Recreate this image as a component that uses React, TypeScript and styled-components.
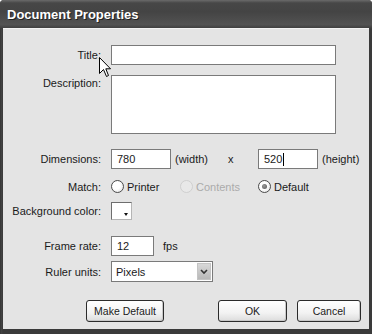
import React from 'react'
import styled, { createGlobalStyle } from 'styled-components'

const GlobalStyle = createGlobalStyle`
  html, body {
    margin: 0;
    padding: 0;
    background: #fff;
  }
  body {
    font-family: "Liberation Sans", Arial, sans-serif;
    font-size: 11px;
    color: #1a1a1a;
  }
`

const Window = styled.div`
  position: relative;
  width: 372px;
  height: 334px;
  box-sizing: border-box;
  display: flex;
  flex-direction: column;
  background: linear-gradient(90deg, #2e2e2e, #444 1px, #3a3a3a 3px);
  border-radius: 4px 4px 0 0;
  overflow: hidden;
`

const TitleBar = styled.div`
  height: 29px;
  flex-shrink: 0;
  display: flex;
  align-items: center;
  padding-left: 7px;
  padding-bottom: 1px;
  box-sizing: border-box;
  background: linear-gradient(#6a6a6a 0, #474747 3px, #444 40%, #525252 85%, #3a3a3a 100%);
  color: #fff;
  font-size: 13px;
  font-weight: bold;
  text-shadow: 1px 1px 0 #222;
`

const Body = styled.div`
  flex: 1;
  margin: 0 3px 5px 3px;
  padding-top: 16px;
  display: flex;
  flex-direction: column;
  background: #e4e4e4;
  border-top: 1px solid #f2f2f2;
  margin-top: -1px;
`

const Row = styled.div<{ $top: number; $align?: string }>`
  display: flex;
  align-items: ${p => p.$align || 'center'};
  margin-top: ${p => p.$top}px;
`

const Label = styled.div<{ $pad?: number }>`
  width: 98px;
  flex-shrink: 0;
  margin-right: 10px;
  text-align: right;
  padding-top: ${p => p.$pad || 0}px;
  white-space: nowrap;
`

const Field = styled.div<{ $w: number; $h?: number }>`
  width: ${p => p.$w}px;
  height: ${p => p.$h || 20}px;
  box-sizing: border-box;
  flex-shrink: 0;
  display: flex;
  align-items: center;
  padding-left: 5px;
  border: 1px solid #7a7a7a;
  background: #fff;
`

const Caret = styled.span`
  display: inline-block;
  width: 1px;
  height: 13px;
  margin-left: 1px;
  background: #000;
`

const Text = styled.span<{ $left?: number; $muted?: boolean }>`
  margin-left: ${p => p.$left || 0}px;
  color: ${p => (p.$muted ? '#ababab' : 'inherit')};
  white-space: nowrap;
`

const Option = styled.div<{ $w?: number }>`
  display: flex;
  align-items: center;
  width: ${p => (p.$w ? `${p.$w}px` : 'auto')};
  flex-shrink: 0;
`

const Radio = styled.span<{ $checked?: boolean; $disabled?: boolean }>`
  width: 13px;
  height: 13px;
  box-sizing: border-box;
  border-radius: 50%;
  margin-right: 3px;
  display: flex;
  align-items: center;
  justify-content: center;
  border: 1px solid ${p => (p.$disabled ? '#cfcfcf' : '#4a4a4a')};
  background: ${p => (p.$disabled ? '#e8e8e8' : 'radial-gradient(circle at 40% 40%, #fff 40%, #dcdcdc 100%)')};

  &::after {
    content: '';
    display: ${p => (p.$checked ? 'block' : 'none')};
    width: 5px;
    height: 5px;
    border-radius: 50%;
    background: radial-gradient(circle at 40% 40%, #9a9a9a, #555);
  }
`

const Swatch = styled.div`
  position: relative;
  width: 21px;
  height: 18px;
  box-sizing: border-box;
  border: 1px solid #6e6e6e;
  border-right-color: #b5b5b5;
  border-bottom-color: #b5b5b5;
  background: #fff;

  &::after {
    content: '';
    position: absolute;
    right: 3px;
    bottom: 3px;
    border-left: 2.5px solid transparent;
    border-right: 2.5px solid transparent;
    border-top: 3px solid #111;
  }
`

const Select = styled.div`
  width: 102px;
  height: 21px;
  box-sizing: border-box;
  display: flex;
  align-items: center;
  padding: 0 1px 0 4px;
  border: 1px solid #7a7a7a;
  background: #fff;
`

const SelectValue = styled.span`
  flex: 1;
`

const SelectArrow = styled.span`
  width: 14px;
  height: 17px;
  display: flex;
  align-items: center;
  justify-content: center;
  background: linear-gradient(#d8d8d8, #b8b8b8);
  border: 1px solid #c4c4c4;
  box-sizing: border-box;
`

const ButtonRow = styled.div`
  display: flex;
  align-items: center;
  margin-top: 18px;
  padding: 0 8px 0 83px;
`

const Button = styled.div<{ $w: number; $gap?: number }>`
  width: ${p => p.$w}px;
  height: 22px;
  box-sizing: border-box;
  margin-left: ${p => p.$gap || 0}px;
  display: flex;
  align-items: center;
  justify-content: center;
  border: 1px solid #2b2b2b;
  border-radius: 3px;
  background: linear-gradient(#ffffff, #f2f2f2 60%, #dcdcdc);
  box-shadow: inset -1px -1px 0 #c8c8c8;
  font-size: 10.5px;
`

const Spacer = styled.div`
  flex: 1;
`

const Pointer = styled.svg`
  position: absolute;
  left: 99px;
  top: 57px;
`

const App = () => {
  return (
    <>
      <GlobalStyle />
      <Window>
        <TitleBar>Document Properties</TitleBar>
        <Body>
          <Row $top={0}>
            <Label>Title:</Label>
            <Field $w={225} />
          </Row>
          <Row $top={10} $align="flex-start">
            <Label $pad={2}>Description:</Label>
            <Field $w={225} $h={59} />
          </Row>
          <Row $top={15}>
            <Label>Dimensions:</Label>
            <Field $w={60}>780</Field>
            <Text $left={4} style={{ width: 53 }}>(width)</Text>
            <Text style={{ width: 30 }}>x</Text>
            <Field $w={60}>
              520<Caret />
            </Field>
            <Text $left={4}>(height)</Text>
          </Row>
          <Row $top={11}>
            <Label>Match:</Label>
            <Option $w={69}>
              <Radio />
              <Text>Printer</Text>
            </Option>
            <Option $w={78}>
              <Radio $disabled />
              <Text $muted>Contents</Text>
            </Option>
            <Option>
              <Radio $checked />
              <Text>Default</Text>
            </Option>
          </Row>
          <Row $top={9}>
            <Label>Background color:</Label>
            <Swatch />
          </Row>
          <Row $top={16}>
            <Label>Frame rate:</Label>
            <Field $w={43}>12</Field>
            <Text $left={9}>fps</Text>
          </Row>
          <Row $top={5}>
            <Label>Ruler units:</Label>
            <Select>
              <SelectValue>Pixels</SelectValue>
              <SelectArrow>
                <svg width="8" height="6" viewBox="0 0 8 6">
                  <path d="M1 1 L4 4 L7 1" fill="none" stroke="#333" strokeWidth="1.6" />
                </svg>
              </SelectArrow>
            </Select>
          </Row>
          <ButtonRow>
            <Button $w={78}>Make Default</Button>
            <Spacer />
            <Button $w={69}>OK</Button>
            <Button $w={64} $gap={10}>Cancel</Button>
          </ButtonRow>
        </Body>
        <Pointer width="13" height="21" viewBox="0 0 13 21">
          <path
            d="M0.5 0.5 V16.5 L4.5 12.5 L7.5 19.5 L9.5 18.5 L6.8 11.8 H11.5 Z"
            fill="#fff"
            stroke="#000"
            strokeWidth="1"
            strokeLinejoin="miter"
          />
        </Pointer>
      </Window>
    </>
  )
}

export default App
